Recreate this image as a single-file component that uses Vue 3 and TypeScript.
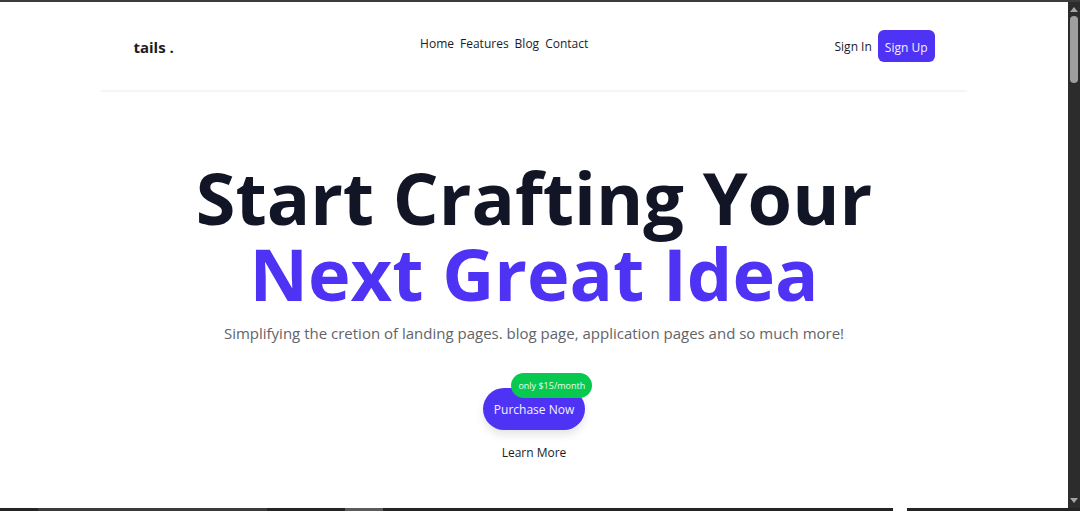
<script setup lang="ts">
const links: string[] = ['Home', 'Features', 'Blog', 'Contact']
</script>

<template>
  <div class="window">
    <div class="view">
      <div class="page">
        <header class="header">
          <a class="logo" href="#">tails .</a>
          <nav class="nav">
            <a v-for="link in links" :key="link" href="#">{{ link }}</a>
          </nav>
          <div class="account">
            <a href="#">Sign In</a>
            <button class="signup" type="button">Sign Up</button>
          </div>
        </header>
        <main class="hero">
          <h1>Start Crafting Your <span>Next Great Idea</span></h1>
          <p>Simplifying the cretion of landing pages. blog page, application pages and so much more!</p>
          <div class="actions">
            <div class="buy">
              <button class="purchase" type="button">Purchase Now</button>
              <span class="price">only $15/month</span>
            </div>
            <a href="#">Learn More</a>
          </div>
        </main>
      </div>
      <div class="scrollbar" aria-hidden="true">
        <svg width="8" height="5" viewBox="0 0 8 5"><path d="M4 0 8 5H0Z" /></svg>
        <div class="thumb"></div>
        <svg class="down" width="8" height="5" viewBox="0 0 8 5"><path d="M0 0H8L4 5Z" /></svg>
      </div>
    </div>
    <div class="taskbar" aria-hidden="true">
      <i class="start"></i><i class="search"></i><i class="gap"></i><i class="item"></i><i class="rest"></i><i class="light"></i><i class="tray"></i>
    </div>
  </div>
</template>

<style>
body {
  margin: 0;
  background: #fff;
}
</style>

<style scoped>
.window {
  display: flex;
  flex-direction: column;
  min-height: 100vh;
  box-sizing: border-box;
  border-top: 2px solid #3c3c3c;
  background: #fff;
  color: #1c1c1e;
  font-family: "Segoe UI", "Open Sans", "Noto Sans", sans-serif;
  font-size: 12px;
  line-height: 28px;
}
a {
  color: inherit;
  text-decoration: none;
}
button {
  border: 0;
  background: #4f33f5;
  color: #f3f1ff;
  font: inherit;
  cursor: pointer;
}
.view {
  display: flex;
  flex: 1;
}
.page {
  flex: 1;
}
.header {
  display: flex;
  justify-content: space-between;
  width: 81%;
  box-sizing: border-box;
  margin: 0 auto;
  padding: 28px 32px;
  border-bottom: 2px solid #f5f5f6;
}
.logo {
  font-size: 15px;
  font-weight: 700;
  line-height: 34px;
}
.nav {
  display: flex;
  gap: 6px;
}
.account {
  display: flex;
  align-items: flex-start;
  gap: 6px;
  height: 32px;
  line-height: 34px;
}
.signup {
  height: 32px;
  padding: 1px 7px 0;
  border-radius: 6px;
}
.logo,
.nav {
  height: 32px;
}
.hero {
  display: flex;
  flex-direction: column;
  align-items: center;
  padding: 67px 32px 38px;
  text-align: center;
}
h1 {
  margin: 0;
  color: #111526;
  font-size: 72px;
  font-weight: 700;
  line-height: 76px;
}
h1 span {
  display: block;
  color: #4f33f5;
}
p {
  margin: 8px 0 41px;
  color: #626469;
  font-size: 15px;
  line-height: 28px;
}
.actions {
  display: flex;
  flex-direction: column;
  align-items: center;
  gap: 9px;
}
.buy {
  position: relative;
}
.purchase {
  display: block;
  height: 42px;
  padding: 1px 11px 0;
  border-radius: 21px;
  box-shadow: 0 5px 8px rgba(0, 0, 0, 0.1);
}
.price {
  position: absolute;
  top: -15px;
  right: -7px;
  padding: 0 7px;
  border-radius: 13px;
  background: #08c94f;
  color: #e9ffef;
  font-size: 9px;
  line-height: 25px;
  white-space: nowrap;
}
.scrollbar {
  display: flex;
  flex-direction: column;
  align-items: center;
  width: 12px;
  box-sizing: border-box;
  padding: 5px 0;
  background: #2c2c2c;
}
.scrollbar svg {
  fill: #a5a5a5;
}
.thumb {
  width: 8px;
  height: 67px;
  margin-top: 4px;
  border-radius: 4px;
  background: #9f9f9f;
}
.down {
  margin-top: auto;
}
.taskbar {
  display: flex;
  height: 3px;
  background: #252323;
}
.start {
  width: 38px;
}
.search {
  width: 229px;
  background: #3c3a3a;
}
.gap {
  width: 78px;
}
.item {
  width: 38px;
  background: #5c5a5a;
}
.rest {
  flex: 1;
}
.light {
  width: 14px;
  background: #fff;
}
.tray {
  width: 173px;
}
</style>
